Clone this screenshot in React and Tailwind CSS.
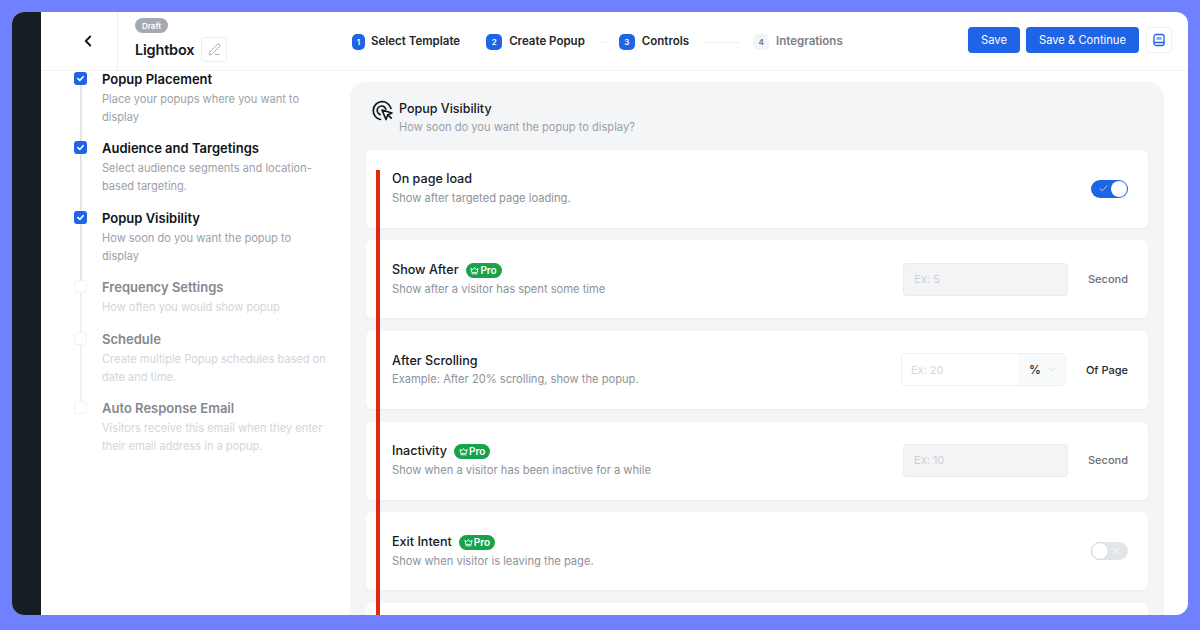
import React from "react";
import { ChevronLeft, ChevronDown, Check, X, PenLine } from "lucide-react";

const CheckMark = () => (
  <svg width="9" height="9" viewBox="0 0 12 12" fill="none" stroke="#fff" strokeWidth="2.2" strokeLinecap="round" strokeLinejoin="round">
    <path d="M2.5 6.2 5 8.6l4.5-5" />
  </svg>
);

const Crown = () => (
  <svg width="9" height="9" viewBox="0 0 12 12" fill="none" stroke="#fff" strokeWidth="1.2" strokeLinejoin="round" strokeLinecap="round">
    <path d="M2.2 8 1.2 3.2 4 5l2-3 2 3 2.8-1.8L9.8 8z" />
    <path d="M2.6 10.4h6.8" />
  </svg>
);

const Pro = () => (
  <span className="inline-flex h-[15px] w-[36px] items-center justify-center gap-[1px] rounded-full bg-[#16a34a] text-[10px] leading-none font-semibold text-white">
    <Crown />
    Pro
  </span>
);

const steps = [
  { done: true, title: "Popup Placement", lines: ["Place your popups where you want to", "display"] },
  { done: true, title: "Audience and Targetings", lines: ["Select audience segments and location-", "based targeting."] },
  { done: true, title: "Popup Visibility", lines: ["How soon do you want the popup to", "display"] },
  { done: false, title: "Frequency Settings", lines: ["How often you would show popup"] },
  { done: false, title: "Schedule", lines: ["Create multiple Popup schedules based on", "date and time."] },
  { done: false, title: "Auto Response Email", lines: ["Visitors receive this email when they enter", "their email address in a popup."], last: true },
];

const SideStep = ({ done, title, lines, last }) => (
  <div className="flex gap-[15px]">
    <div className="flex w-[13px] shrink-0 flex-col items-center">
      {done ? (
        <span className="flex size-[13px] shrink-0 items-center justify-center rounded-[3px] bg-[#1f63e6]">
          <CheckMark />
        </span>
      ) : (
        <span className="size-[13px] shrink-0 rounded-[3px] border border-[#f1f2f4] bg-white" />
      )}
      {!last && <span className={`w-[2px] flex-1 ${done ? "bg-[#e3e5e8]" : "bg-[#f0f1f3]"}`} />}
    </div>
    <div className="pb-[15.5px]">
      <div className={`text-[13px] leading-[15px] font-semibold whitespace-nowrap ${done ? "text-[#0f1216]" : "text-[#85888d]"}`}>{title}</div>
      <div className={`mt-[3px] text-[11.05px] leading-[18px] whitespace-nowrap ${done ? "text-[#9da1a7]" : "text-[#d3d5d8]"}`}>
        {lines.map((l) => (
          <div key={l}>{l}</div>
        ))}
      </div>
    </div>
  </div>
);

const HeadStep = ({ n, label, active, narrow, line }) => (
  <>
    <div className={`flex shrink-0 items-center ${narrow ? "gap-[6px]" : "gap-[7px]"}`}>
      <span
        className={`flex h-[16px] items-center justify-center rounded-[5px] text-[8px] font-semibold ${narrow ? "w-[13px]" : "w-[16px]"} ${
          active ? "bg-[#1f63e6] text-white" : "bg-[#f3f4f6] text-[#6b7280]"
        }`}
      >
        {n}
      </span>
      <span className={`text-[11.5px] font-semibold whitespace-nowrap ${active ? "text-[#23272e]" : "text-[#7b8088]"}`}>{label}</span>
    </div>
    {line}
  </>
);

const Toggle = ({ on }) =>
  on ? (
    <span className="flex h-[18px] w-[37px] items-center justify-between rounded-full bg-[#1f63e6] pr-[1px] pl-[7px]">
      <Check size={11} color="#fff" strokeWidth={1.5} />
      <span className="size-[16px] rounded-full bg-white" />
    </span>
  ) : (
    <span className="flex h-[18px] w-[37px] items-center justify-between rounded-full bg-[#e3e6e8] pr-[6px]">
      <span className="size-[18px] rounded-full border border-[#cfd3d6] bg-white" />
      <X size={11} color="#fff" strokeWidth={1.8} />
    </span>
  );

const Card = ({ title, sub, pro, right }) => (
  <div className="flex h-[78px] shrink-0 items-center justify-between rounded-[6px] bg-white pr-[20px] pl-[26px] shadow-[0_1px_2px_rgba(17,24,39,0.04)]">
    <div className="-mt-[0.7px]">
      <div className="flex items-center gap-[7px] text-[12.6px] leading-[18px] font-medium text-[#14181d]">
        {title}
        {pro && <Pro />}
      </div>
      <div className="mt-[1.7px] text-[11.15px] leading-[16px] text-[#8e9299]">{sub}</div>
    </div>
    {right}
  </div>
);

const SecondInput = ({ text }) => (
  <div className="flex items-center">
    <div className="flex h-[33px] w-[165px] items-center rounded-[4px] border border-[#e9ebee] bg-[#f3f4f6] pl-[10px] text-[11px] text-[#ced1d5]">{text}</div>
    <span className="ml-[20px] text-[11px] font-medium text-[#6b7078]">Second</span>
  </div>
);

export default function App() {
  return (
    <div className="h-[630px] w-[1200px] overflow-hidden bg-[#7081ff] pt-[12px] pl-[12px] font-['Inter',sans-serif]">
      <div className="flex h-[603px] w-[1176px] overflow-hidden rounded-[12px] bg-white">
        <div className="w-[29px] shrink-0 bg-[#151f23]" />
        <div className="flex min-w-0 flex-1 flex-col">
          <header className="flex h-[59px] shrink-0 items-center border-b border-[#f3f4f6]">
            <div className="flex h-full w-[77px] shrink-0 items-center justify-center border-r border-[#eceef0] pl-[17px]">
              <ChevronLeft size={18} color="#111" strokeWidth={2.4} />
            </div>
            <div className="flex h-full w-[234px] shrink-0 flex-col pl-[17px]">
              <span className="mt-[6px] flex h-[15px] w-[33px] items-center justify-center rounded-full bg-[#a4a9b2] text-[8px] font-semibold text-white">Draft</span>
              <div className="mt-[4px] flex items-center gap-[7px]">
                <span className="text-[14.5px] leading-[25px] font-semibold tracking-[-0.2px] text-[#14181d]">Lightbox</span>
                <span className="flex h-[25px] w-[26px] items-center justify-center rounded-[4px] border border-[#eceef0]">
                  <PenLine size={13} color="#8b8f96" strokeWidth={1.3} />
                </span>
              </div>
            </div>
            <div className="mt-[2px] flex min-w-0 flex-1 items-center">
              <HeadStep n="1" label="Select Template" active narrow line={<span className="w-[26px]" />} />
              <HeadStep n="2" label="Create Popup" active line={<span className="mx-[12px] h-px w-[10px] bg-[#f3f4f6]" />} />
              <HeadStep n="3" label="Controls" active line={<span className="mx-[13px] h-px w-[38px] bg-[#eef0f2]" />} />
              <HeadStep n="4" label="Integrations" />
            </div>
            <div className="-mt-[2px] flex shrink-0 items-center pr-[16px]">
              <button className="h-[26px] w-[52px] rounded-[4px] bg-[#1f63e6] text-[11.3px] font-normal text-white">Save</button>
              <button className="ml-[6px] h-[26px] w-[113px] rounded-[4px] bg-[#1f63e6] text-[11.2px] font-normal text-white">Save &amp; Continue</button>
              <span className="ml-[7px] flex h-[26px] w-[26px] items-center justify-center rounded-[4px] border border-[#eceef0]">
                <svg width="14" height="14" viewBox="0 0 14 14" fill="none" stroke="#1f63e6" strokeWidth="1.3" strokeLinejoin="round" strokeLinecap="round">
                  <rect x="2" y="1.5" width="10" height="11" rx="2" />
                  <path d="M2 9.5h10" />
                  <rect x="4.4" y="4" width="5.2" height="2.8" fill="#1f63e6" fillOpacity="0.55" stroke="none" />
                </svg>
              </span>
            </div>
          </header>

          <div className="flex min-h-0 flex-1 overflow-hidden">
            <aside className="w-[309px] shrink-0 pt-[0.5px] pl-[33px]">
              {steps.map((s) => (
                <SideStep key={s.title} {...s} />
              ))}
            </aside>
            <main className="relative mt-[11px] mr-[24px] flex min-w-0 flex-1 flex-col rounded-t-[16px] bg-[#f3f5f6] px-[16px]">
              <span className="absolute top-[88px] bottom-0 left-[26px] z-10 w-[4px] bg-[#de2a12]" />
              <div className="flex h-[67.5px] shrink-0 gap-[5px] pt-[17px] pl-[5px]">
                <svg className="shrink-0" width="23" height="23" viewBox="0 0 23 23" fill="none" stroke="#14181d" strokeWidth="1.7" strokeLinecap="round" strokeLinejoin="round">
                  <path d="M9.5 20.5A9 9 0 1 1 20 9.5" />
                  <path d="M9.2 15.6a4.4 4.4 0 1 1 5.6-5.4" />
                  <path d="m11 11 10 3-4.2 1.8L15 20.5z" />
                  <path d="m17 16 3.2 3.2" />
                </svg>
                <div>
                  <div className="mt-[1px] text-[12.5px] leading-[18px] font-medium text-[#14181d]">Popup Visibility</div>
                  <div className="mt-[1px] text-[11.1px] leading-[16px] text-[#9da1a7]">How soon do you want the popup to display?</div>
                </div>
              </div>
              <div className="flex flex-col gap-[12.7px]">
                <Card title="On page load" sub="Show after targeted page loading." right={<Toggle on />} />
                <Card title="Show After" pro sub="Show after a visitor has spent some time" right={<SecondInput text="Ex: 5" />} />
                <Card
                  title="After Scrolling"
                  sub="Example: After 20% scrolling, show the popup."
                  right={
                    <div className="flex items-center">
                      <div className="flex h-[33px] w-[165px] overflow-hidden rounded-[4px] border border-[#eef0f2]">
                        <div className="flex flex-1 items-center pl-[9px] text-[11px] text-[#d6d8dc]">Ex: 20</div>
                        <div className="flex w-[47px] items-center gap-[6px] bg-[#f9fafb] pl-[11px] text-[12px] font-medium text-[#23272e]">
                          %<ChevronDown size={11} color="#c9ccd1" strokeWidth={1.4} />
                        </div>
                      </div>
                      <span className="ml-[20px] text-[11px] font-medium text-[#23272e]">Of Page</span>
                    </div>
                  }
                />
                <Card title="Inactivity" pro sub="Show when a visitor has been inactive for a while" right={<SecondInput text="Ex: 10" />} />
                <Card title="Exit Intent" pro sub="Show when visitor is leaving the page." right={<Toggle />} />
                <div className="h-[78px] shrink-0 rounded-[6px] bg-white" />
              </div>
            </main>
          </div>
        </div>
      </div>
    </div>
  );
}
